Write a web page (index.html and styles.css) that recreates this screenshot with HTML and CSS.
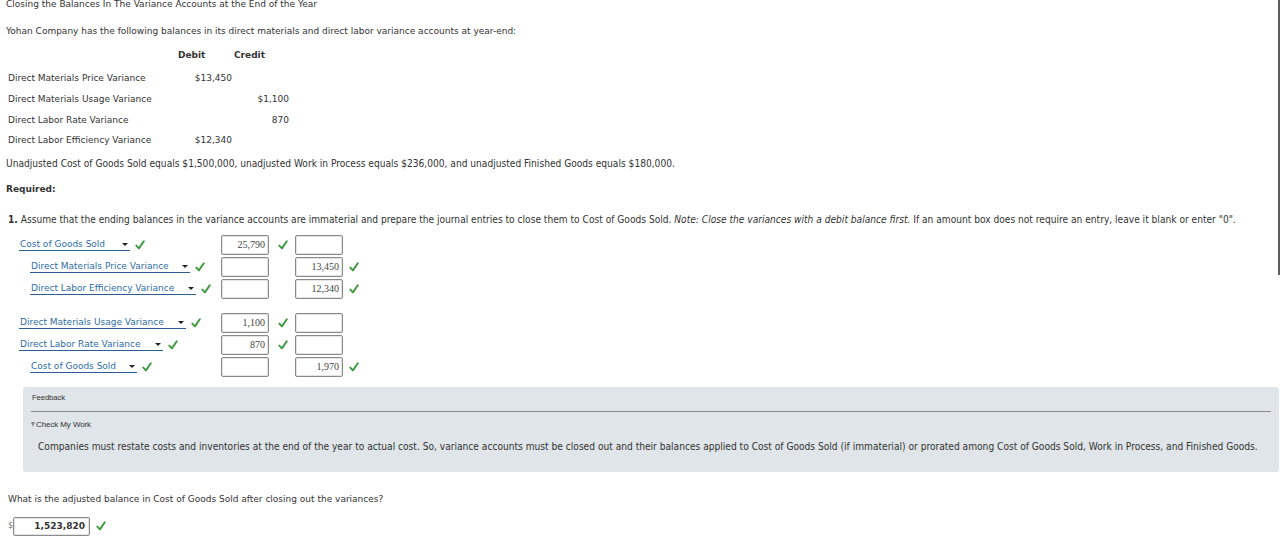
FILE: index.html
```html
<!DOCTYPE html>
<html>
<head>
<meta charset="utf-8">
<title>Closing the Balances</title>
<link rel="stylesheet" href="styles.css">
</head>
<body>
<div class="scrollbar"></div>
<main class="page">
  <p class="title">Closing the Balances In The Variance Accounts at the End of the Year</p>
  <p class="intro">Yohan Company has the following balances in its direct materials and direct labor variance accounts at year-end:</p>

  <div class="bal">
    <div class="bh"></div><div class="bh debit-h">Debit</div><div class="bh credit-h">Credit</div>
    <div class="bl">Direct Materials Price Variance</div><div class="bd">$13,450</div><div class="bc"></div>
    <div class="bl">Direct Materials Usage Variance</div><div class="bd"></div><div class="bc">$1,100</div>
    <div class="bl">Direct Labor Rate Variance</div><div class="bd"></div><div class="bc">870</div>
    <div class="bl">Direct Labor Efficiency Variance</div><div class="bd">$12,340</div><div class="bc"></div>
  </div>

  <p class="narrow unadj">Unadjusted Cost of Goods Sold equals $1,500,000, unadjusted Work in Process equals $236,000, and unadjusted Finished Goods equals $180,000.</p>
  <p class="req">Required:</p>
  <p class="narrow task"><b>1.</b> Assume that the ending balances in the variance accounts are immaterial and prepare the journal entries to close them to Cost of Goods Sold. <i>Note: Close the variances with a debit balance first.</i> If an amount box does not require an entry, leave it blank or enter "0".</p>

  <div class="journal">
    <div class="jgroup">
      <div class="jrow">
        <div class="acct"><span class="sel w1">Cost of Goods Sold<span class="arrow"></span></span><svg class="ok" viewBox="0 0 10 10"><path d="M1.3 5.6 L3.9 8.4 L8.8 1.2"/></svg></div>
        <div class="amt">25,790</div><div class="ck"><svg class="ok" viewBox="0 0 10 10"><path d="M1.3 5.6 L3.9 8.4 L8.8 1.2"/></svg></div>
        <div class="amt"></div><div class="ck2"></div>
      </div>
      <div class="jrow">
        <div class="acct ind"><span class="sel w2">Direct Materials Price Variance<span class="arrow"></span></span><svg class="ok" viewBox="0 0 10 10"><path d="M1.3 5.6 L3.9 8.4 L8.8 1.2"/></svg></div>
        <div class="amt"></div><div class="ck"></div>
        <div class="amt">13,450</div><div class="ck2"><svg class="ok" viewBox="0 0 10 10"><path d="M1.3 5.6 L3.9 8.4 L8.8 1.2"/></svg></div>
      </div>
      <div class="jrow">
        <div class="acct ind"><span class="sel w3">Direct Labor Efficiency Variance<span class="arrow"></span></span><svg class="ok" viewBox="0 0 10 10"><path d="M1.3 5.6 L3.9 8.4 L8.8 1.2"/></svg></div>
        <div class="amt"></div><div class="ck"></div>
        <div class="amt">12,340</div><div class="ck2"><svg class="ok" viewBox="0 0 10 10"><path d="M1.3 5.6 L3.9 8.4 L8.8 1.2"/></svg></div>
      </div>
    </div>
    <div class="jgroup">
      <div class="jrow">
        <div class="acct"><span class="sel w4">Direct Materials Usage Variance<span class="arrow"></span></span><svg class="ok" viewBox="0 0 10 10"><path d="M1.3 5.6 L3.9 8.4 L8.8 1.2"/></svg></div>
        <div class="amt">1,100</div><div class="ck"><svg class="ok" viewBox="0 0 10 10"><path d="M1.3 5.6 L3.9 8.4 L8.8 1.2"/></svg></div>
        <div class="amt"></div><div class="ck2"></div>
      </div>
      <div class="jrow">
        <div class="acct"><span class="sel w5">Direct Labor Rate Variance<span class="arrow"></span></span><svg class="ok" viewBox="0 0 10 10"><path d="M1.3 5.6 L3.9 8.4 L8.8 1.2"/></svg></div>
        <div class="amt">870</div><div class="ck"><svg class="ok" viewBox="0 0 10 10"><path d="M1.3 5.6 L3.9 8.4 L8.8 1.2"/></svg></div>
        <div class="amt"></div><div class="ck2"></div>
      </div>
      <div class="jrow">
        <div class="acct ind"><span class="sel w6">Cost of Goods Sold<span class="arrow"></span></span><svg class="ok" viewBox="0 0 10 10"><path d="M1.3 5.6 L3.9 8.4 L8.8 1.2"/></svg></div>
        <div class="amt"></div><div class="ck"></div>
        <div class="amt">1,970</div><div class="ck2"><svg class="ok" viewBox="0 0 10 10"><path d="M1.3 5.6 L3.9 8.4 L8.8 1.2"/></svg></div>
      </div>
    </div>
  </div>

  <section class="feedback">
    <div class="fb-head">Feedback</div>
    <div class="fb-rule"></div>
    <div class="fb-toggle"><span class="tri"></span>Check My Work</div>
    <p class="narrow fb-text">Companies must restate costs and inventories at the end of the year to actual cost. So, variance accounts must be closed out and their balances applied to Cost of Goods Sold (if immaterial) or prorated among Cost of Goods Sold, Work in Process, and Finished Goods.</p>
  </section>

  <p class="question">What is the adjusted balance in Cost of Goods Sold after closing out the variances?</p>
  <div class="answer">
    <span class="dollar">$</span><span class="ans-box">1,523,820</span><svg class="ok" viewBox="0 0 10 10"><path d="M1.3 5.6 L3.9 8.4 L8.8 1.2"/></svg>
  </div>
</main>
</body>
</html>
```

FILE: styles.css
```css
* { box-sizing: border-box; margin: 0; padding: 0; }

body {
  margin: 0;
  width: 1281px;
  height: 539px;
  overflow: hidden;
  position: relative;
  background: #fff;
  color: #333;
  font-family: "DejaVu Sans", Verdana, sans-serif;
  font-size: 9px;
}

.scrollbar {
  position: absolute;
  left: 1278px;
  top: 0;
  width: 2px;
  height: 275px;
  background: #5c5c5c;
}

.page { padding-left: 6px; }

.title { line-height: 9px; }
.intro { margin-top: 18px; line-height: 9px; }

.bal {
  display: grid;
  grid-template-columns: 164px 62px 57px;
  grid-template-rows: 22px repeat(4, 20.67px);
  align-items: center;
  margin-top: 10px;
  margin-left: 2px;
}
.bh { align-self: start; line-height: 18px; font-weight: bold; }
.debit-h { padding-left: 6px; }
.credit-h { padding-left: 0; }
.bd, .bc { text-align: right; padding-right: 2px; }

.narrow {
  font-family: "DejaVu Sans Condensed", "DejaVu Sans", sans-serif;
  font-stretch: condensed;
  font-size: 10.12px;
}

.unadj { margin-top: 8px; line-height: 10px; }
.req { margin-top: 15px; line-height: 10px; font-weight: bold; }
.task { margin-top: 21px; line-height: 10px; padding-left: 2px; }

.journal { margin-top: 9px; margin-left: 13px; display: flex; flex-direction: column; gap: 12px; }
.jgroup { display: flex; flex-direction: column; }
.jrow {
  display: grid;
  grid-template-columns: 202px 48px 26px 48px 20px;
  height: 22px;
  align-items: center;
}
.acct { display: flex; align-items: center; gap: 5px; }
.acct.ind { padding-left: 11px; }

.sel {
  display: inline-flex;
  align-items: center;
  justify-content: space-between;
  height: 12px;
  padding: 0 2px 0 1px;
  color: #2e6da6;
  border-bottom: 1.5px solid #2a5f93;
  line-height: 11px;
}
.w1 { width: 111px; }
.w2 { width: 160px; }
.w3 { width: 166px; }
.w4 { width: 167px; }
.w5 { width: 144px; }
.w6 { width: 107px; }

.arrow {
  flex: none;
  width: 0;
  height: 0;
  border-left: 3px solid transparent;
  border-right: 3px solid transparent;
  border-top: 3px solid #222;
}

.ok { width: 10px; height: 10px; flex: none; }
.ok path { fill: none; stroke: #3c9a3c; stroke-width: 1.9; stroke-linecap: round; stroke-linejoin: round; }

.amt {
  height: 20px;
  border: 1px solid #8a8a8a;
  border-radius: 2px;
  box-shadow: inset 0 0 0 1px #e4e4e4;
  font-family: "Liberation Serif", "Times New Roman", serif;
  font-size: 10px;
  color: #444;
  text-align: right;
  line-height: 18px;
  padding-right: 3px;
}
.ck { display: flex; justify-content: center; padding-left: 1px; }
.ck2 { display: flex; padding-left: 6px; }

.feedback {
  margin-top: 9px;
  margin-left: 17px;
  width: 1256px;
  height: 85px;
  background: #dfe5e8;
  border-radius: 3px;
  padding: 6px 8px 0 8px;
}
.fb-head {
  font-family: "Liberation Sans", Arial, sans-serif;
  font-size: 7.7px;
  line-height: 10px;
  padding-left: 1px;
  letter-spacing: -0.1px;
}
.fb-rule { margin-top: 8px; height: 1px; background: #8c8c8c; }
.fb-toggle {
  margin-top: 8px;
  font-family: "Liberation Sans", Arial, sans-serif;
  font-size: 8px;
  line-height: 10px;
  display: flex;
  align-items: center;
  letter-spacing: -0.1px;
}
.tri {
  width: 0;
  height: 0;
  border-left: 2.5px solid transparent;
  border-right: 2.5px solid transparent;
  border-top: 5px solid #8a8a8a;
  margin-right: 1px;
}
.fb-text { margin-top: 12px; line-height: 10px; padding-left: 7px; }

.question { margin-top: 22px; line-height: 10px; padding-left: 2px; }

.answer { margin-top: 13px; display: flex; align-items: center; }
.dollar { width: 5px; margin-left: 2px; color: #777; font-size: 8px; line-height: 10px; }
.ans-box {
  width: 77px;
  height: 19px;
  border: 1px solid #8a8a8a;
  border-radius: 2px;
  box-shadow: inset 0 0 0 1px #e4e4e4;
  font-weight: bold;
  font-size: 9px;
  line-height: 17px;
  text-align: right;
  padding-right: 4px;
  color: #333;
}
.answer .ok { margin-left: 6px; }
```
